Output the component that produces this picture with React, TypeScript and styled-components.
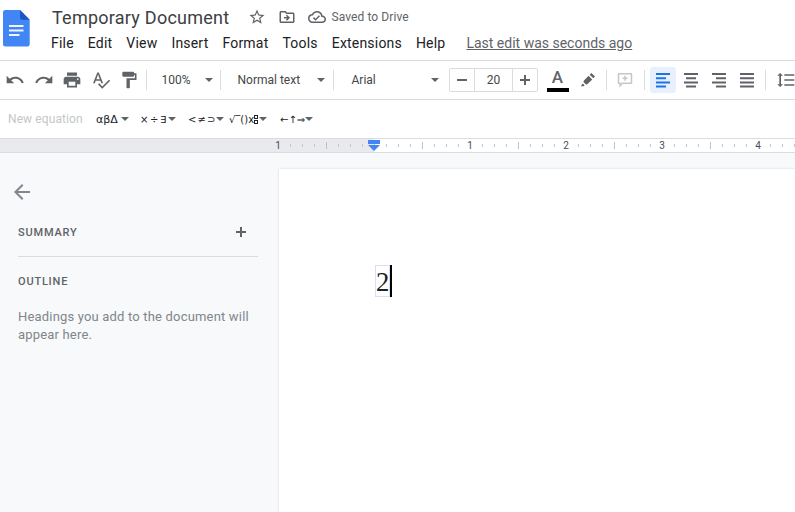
import React from 'react'
import styled, { createGlobalStyle } from 'styled-components'
import {
  MdArrowBack,
  MdFormatLineSpacing,
  MdFormatPaint,
  MdOutlineCloudDone,
  MdOutlineDriveFileMove,
  MdPrint,
  MdRedo,
  MdSpellcheck,
  MdStarBorder,
  MdUndo,
} from 'react-icons/md'

const GlobalStyle = createGlobalStyle`
  html, body {
    margin: 0;
    width: 795px;
    height: 512px;
    overflow: hidden;
    background: #fff;
    font-family: Roboto, "Liberation Sans", sans-serif;
  }
`

const Root = styled.div`
  width: 795px;
  height: 512px;
  display: flex;
  flex-direction: column;
  overflow: hidden;
`

const Header = styled.header`
  height: 60px;
  display: flex;
  flex-shrink: 0;
  border-bottom: 1px solid #dadce0;
`
const LogoSlot = styled.div`
  width: 52px;
  padding: 10px 0 0 3px;
  box-sizing: border-box;
`
const HeaderMain = styled.div`
  display: flex;
  flex-direction: column;
`
const TitleRow = styled.div`
  height: 34px;
  display: flex;
  align-items: center;
  color: #5f6368;
`
const Title = styled.span`
  font-size: 18px;
  letter-spacing: 0.25px;
  color: #3c4043;
  margin-right: 19px;
`
const StatusIcons = styled.div`
  display: flex;
  align-items: center;
  gap: 12px;
  font-size: 18px;
`
const Saved = styled.span`
  font-size: 12px;
  color: #5f6368;
  margin-left: -7px;
  letter-spacing: 0.1px;
`
const MenuRow = styled.nav`
  display: flex;
  align-items: center;
  height: 18px;
  margin-left: -1px;
`
const MenuItem = styled.span`
  font-size: 14px;
  letter-spacing: 0.2px;
  color: #202124;
  margin-right: 14px;
`
const LastEdit = styled.span`
  font-size: 14px;
  color: #5f6368;
  text-decoration: underline;
  margin-left: 7px;
`

const Toolbar = styled.div`
  height: 38px;
  display: flex;
  align-items: center;
  padding-left: 1px;
  flex-shrink: 0;
  border-bottom: 1px solid #dadce0;
`
const ToolIcon = styled.span<{ $w?: number; $mr?: number; $muted?: boolean; $active?: boolean }>`
  width: ${(p) => p.$w ?? 28.5}px;
  height: 26px;
  margin-right: ${(p) => p.$mr ?? 0}px;
  flex-shrink: 0;
  display: flex;
  align-items: center;
  justify-content: center;
  border-radius: 3px;
  font-size: 20px;
  color: ${(p) => (p.$active ? '#1a73e8' : p.$muted ? '#bdc1c6' : '#5f6368')};
  background: ${(p) => (p.$active ? '#e8f0fe' : 'transparent')};
`
const Sep = styled.span<{ $ml?: number; $mr?: number }>`
  width: 1px;
  height: 20px;
  flex-shrink: 0;
  background: #dadce0;
  margin: 0 ${(p) => p.$mr ?? 5}px 0 ${(p) => p.$ml ?? 5}px;
`
const Picker = styled.span<{ $w: number; $pl: number }>`
  width: ${(p) => p.$w}px;
  padding-left: ${(p) => p.$pl}px;
  box-sizing: border-box;
  flex-shrink: 0;
  display: flex;
  align-items: center;
  justify-content: space-between;
  font-size: 12px;
  color: #444746;
`
const Caret = styled.i`
  display: inline-block;
  width: 0;
  height: 0;
  flex-shrink: 0;
  border-left: 4px solid transparent;
  border-right: 4px solid transparent;
  border-top: 4px solid #5f6368;
`
const Stepper = styled.div`
  width: 89px;
  height: 24px;
  margin-left: 10px;
  flex-shrink: 0;
  box-sizing: border-box;
  border: 1px solid #dadce0;
  border-radius: 2px;
  display: grid;
  grid-template-columns: 24px 1fr 24px;
  align-items: center;
  justify-items: center;
  font-size: 12px;
  color: #444746;
`
const StepButton = styled.span`
  width: 100%;
  height: 100%;
  display: flex;
  align-items: center;
  justify-content: center;
  color: #5f6368;
`
const StepValue = styled.span`
  width: 100%;
  height: 100%;
  display: flex;
  align-items: center;
  justify-content: center;
  padding-left: 1px;
  border-left: 1px solid #dadce0;
  border-right: 1px solid #dadce0;
  box-sizing: border-box;
`
const ColorButton = styled.span`
  width: 22px;
  height: 26px;
  margin: 0 9px;
  flex-shrink: 0;
  display: flex;
  flex-direction: column;
  align-items: center;
  justify-content: flex-end;
`
const ColorLetter = styled.span`
  font-size: 17px;
  line-height: 17px;
  font-weight: 500;
  color: #5f6368;
`
const ColorBar = styled.span`
  width: 22px;
  height: 4px;
  margin-top: 2px;
  margin-bottom: 1px;
  background: #000;
`

const EquationBar = styled.div`
  height: 38px;
  display: flex;
  align-items: center;
  padding-left: 8px;
  flex-shrink: 0;
  border-bottom: 1px solid #dadce0;
`
const NewEquation = styled.span`
  font-size: 12px;
  color: #c4c7c5;
  letter-spacing: 0.1px;
  width: 88px;
`
const EqGroup = styled.span<{ $w: number; $mr: number }>`
  width: ${(p) => p.$w}px;
  margin-right: ${(p) => p.$mr}px;
  display: flex;
  align-items: center;
  justify-content: space-between;
  flex-shrink: 0;
`
const EqGlyphs = styled.span<{ $size?: number; $track?: number }>`
  display: inline-flex;
  align-items: center;
  font-family: 'DejaVu Sans', sans-serif;
  font-size: ${(p) => p.$size ?? 10}px;
  letter-spacing: ${(p) => p.$track ?? 0}px;
  color: #202124;
  white-space: pre;
`
const IndexBoxes = styled.span`
  display: inline-flex;
  flex-direction: column;
  gap: 1px;
`
const IndexBox = styled.i`
  display: block;
  width: 2px;
  height: 2px;
  border: 1px solid #202124;
`

const Ruler = styled.div`
  height: 13px;
  position: relative;
  display: flex;
  padding-left: 272px;
  flex-shrink: 0;
  border-bottom: 1px solid #dadce0;
  background: linear-gradient(to right, #e8eaed 374px, #fff 374px);
`
const RulerCell = styled.span`
  width: 12px;
  flex-shrink: 0;
  display: flex;
  align-items: center;
  justify-content: center;
`
const Tick = styled.i<{ $major?: boolean }>`
  display: block;
  width: 1px;
  height: ${(p) => (p.$major ? 7 : 3)}px;
  background: ${(p) => (p.$major ? '#bdc1c6' : '#c4c7c5')};
`
const RulerNumber = styled.span`
  font-size: 10px;
  line-height: 13px;
  color: #4a4a5a;
`
const IndentMarker = styled.span`
  position: absolute;
  left: 368px;
  top: 1px;
  width: 12px;
  display: flex;
  flex-direction: column;
  align-items: center;
`
const IndentTop = styled.i`
  display: block;
  width: 12px;
  height: 4px;
  background: #4285f4;
`
const IndentArrow = styled.i`
  display: block;
  margin-top: 1px;
  width: 0;
  height: 0;
  border-left: 6px solid transparent;
  border-right: 6px solid transparent;
  border-top: 6px solid #4285f4;
`

const Body = styled.div`
  flex: 1;
  display: flex;
  background: #f8f9fa;
  min-height: 0;
`
const Sidebar = styled.aside`
  width: 279px;
  flex-shrink: 0;
  padding: 27px 21px 0 18px;
  box-sizing: border-box;
`
const BackIcon = styled.div`
  margin-left: -8px;
  height: 43px;
  font-size: 24px;
  line-height: 0;
  color: #80868b;
`
const SectionHead = styled.div`
  display: flex;
  align-items: center;
  justify-content: space-between;
  font-size: 11px;
  font-weight: 500;
  letter-spacing: 0.8px;
  color: #5f6368;
  height: 18px;
`
const AddIcon = styled.span`
  display: flex;
  margin-right: 12px;
  color: #5f6368;
`
const Divider = styled.hr`
  margin: 15px 0 15px;
  border: 0;
  border-top: 1px solid #dadce0;
`
const Hint = styled.p`
  margin: 18px 0 0;
  font-size: 13px;
  line-height: 18px;
  letter-spacing: 0.18px;
  color: #80868b;
`
const Page = styled.main`
  flex: 1;
  margin-top: 16px;
  padding: 96px 0 0 96px;
  background: #fff;
  box-shadow: 0 0 2px rgba(60, 64, 67, 0.2);
`
const TextLine = styled.div`
  display: flex;
  align-items: stretch;
  height: 32px;
`
const Digit = styled.span`
  box-sizing: border-box;
  width: 15px;
  background: #fff;
  border: 1px solid #d6defa;
  font-family: 'Liberation Serif', serif;
  font-size: 26.67px;
  line-height: 32px;
  color: #202124;
  text-align: center;
`
const Cursor = styled.i`
  width: 2px;
  background: #000;
`

function DocsLogo() {
  return (
    <svg width="27" height="37" viewBox="0 0 27 37" aria-hidden="true">
      <path d="M2.5 0H17l9.7 9.7V34a2.5 2.5 0 0 1-2.5 2.5H2.5A2.5 2.5 0 0 1 0 34V2.5A2.5 2.5 0 0 1 2.5 0Z" fill="#4285f4" />
      <path d="M17 0l9.7 9.7h-7.4A2.3 2.3 0 0 1 17 7.4Z" fill="#1a56c4" />
      <path d="M6 15h14.5v2H6zM6 19.5h14.5v2H6zM6 24h10.5v2H6z" fill="#f1f5fe" />
    </svg>
  )
}

function HighlightPen() {
  return (
    <svg width="16" height="16" viewBox="0 0 16 16" aria-hidden="true">
      <path d="M11.4 1l3.6 3.6-1.7 1.7-3.6-3.6ZM8.6 3.8l3.6 3.6-4.6 4.6c-.6.6-1.6.6-2.2 0l-1.4-1.4c-.6-.6-.6-1.6 0-2.2ZM2.8 11.4l1.8 1.8-1.1 1H.8Z" fill="#5f6368" />
    </svg>
  )
}

function CommentIcon() {
  return (
    <svg width="16" height="16" viewBox="0 0 16 16" fill="none" aria-hidden="true">
      <path d="M2 1.7h12c.3 0 .5.2.5.5v8.6c0 .3-.2.5-.5.5H5.2L3.2 13.8 3 11.3H2c-.3 0-.5-.2-.5-.5V2.200c0-.3.2-.5.5-.5Z" stroke="#c4c7c5" strokeWidth="1.5" />
      <path d="M8 3.800v5M5.500 6.300h5" stroke="#c4c7c5" strokeWidth="1.500" />
    </svg>
  )
}

function PlusIcon() {
  return (
    <svg width="10" height="10" viewBox="0 0 10 10" aria-hidden="true">
      <path d="M5 0v10M0 5h10" stroke="currentColor" strokeWidth="2" />
    </svg>
  )
}

function MinusIcon() {
  return (
    <svg width="10" height="10" viewBox="0 0 10 10" aria-hidden="true">
      <path d="M0 5h10" stroke="currentColor" strokeWidth="2" />
    </svg>
  )
}

// the docs alignment glyphs have four bars, unlike the five of the material set
const alignBars = {
  left: ['M0 0h14', 'M0 4.200h10', 'M0 8.400h14', 'M0 12.600h10'],
  center: ['M0 0h14', 'M2 4.200h10', 'M0 8.400h14', 'M2 12.600h10'],
  right: ['M0 0h14', 'M4 4.200h10', 'M0 8.400h14', 'M4 12.600h10'],
  justify: ['M0 0h14', 'M0 4.200h14', 'M0 8.400h14', 'M0 12.600h14'],
}

function AlignIcon({ kind }: { kind: keyof typeof alignBars }) {
  return (
    <svg width="14" height="15" viewBox="0 -1 14 15" aria-hidden="true">
      <path d={alignBars[kind].join('')} stroke="currentColor" strokeWidth="2" />
    </svg>
  )
}

const menus = ['File', 'Edit', 'View', 'Insert', 'Format', 'Tools', 'Extensions', 'Help']

// one cell every 12px, a number every 8 cells and a long tick halfway between
const rulerLabels: Record<number, string> = { 0: '1', 16: '1', 24: '2', 32: '3', 40: '4' }
const rulerCells = Array.from({ length: 44 }).map((_, index) => index)

export default function App() {
  return (
    <Root>
      <GlobalStyle />
      <Header>
        <LogoSlot>
          <DocsLogo />
        </LogoSlot>
        <HeaderMain>
          <TitleRow>
            <Title>Temporary Document</Title>
            <StatusIcons>
              <MdStarBorder />
              <MdOutlineDriveFileMove />
              <MdOutlineCloudDone />
              <Saved>Saved to Drive</Saved>
            </StatusIcons>
          </TitleRow>
          <MenuRow>
            {menus.map((menu) => (
              <MenuItem key={menu}>{menu}</MenuItem>
            ))}
            <LastEdit>Last edit was seconds ago</LastEdit>
          </MenuRow>
        </HeaderMain>
      </Header>

      <Toolbar>
        <ToolIcon><MdUndo /></ToolIcon>
        <ToolIcon><MdRedo /></ToolIcon>
        <ToolIcon><MdPrint /></ToolIcon>
        <ToolIcon><MdSpellcheck /></ToolIcon>
        <ToolIcon><MdFormatPaint /></ToolIcon>
        <Sep $ml={2} $mr={0} />
        <Picker $w={66} $pl={15}>100%<Caret /></Picker>
        <Sep $ml={7} $mr={0} />
        <Picker $w={104} $pl={17}>Normal text<Caret /></Picker>
        <Sep $ml={8} $mr={0} />
        <Picker $w={105} $pl={18}>Arial<Caret /></Picker>
        <Stepper>
          <StepButton><MinusIcon /></StepButton>
          <StepValue>20</StepValue>
          <StepButton><PlusIcon /></StepButton>
        </Stepper>
        <ColorButton>
          <ColorLetter>A</ColorLetter>
          <ColorBar />
        </ColorButton>
        <ToolIcon $w={20}><HighlightPen /></ToolIcon>
        <Sep $ml={8} $mr={0} />
        <ToolIcon $w={37} $muted><CommentIcon /></ToolIcon>
        <Sep $ml={0} $mr={5} />
        <ToolIcon $w={26} $mr={1} $active><AlignIcon kind="left" /></ToolIcon>
        <ToolIcon $w={28}><AlignIcon kind="center" /></ToolIcon>
        <ToolIcon $w={28}><AlignIcon kind="right" /></ToolIcon>
        <ToolIcon $w={28}><AlignIcon kind="justify" /></ToolIcon>
        <Sep $ml={4} $mr={6} />
        <ToolIcon><MdFormatLineSpacing /></ToolIcon>
      </Toolbar>

      <EquationBar>
        <NewEquation>New equation</NewEquation>
        <EqGroup $w={33} $mr={11}><EqGlyphs $size={11}>αβΔ</EqGlyphs><Caret /></EqGroup>
        <EqGroup $w={35} $mr={13}><EqGlyphs $track={1.5}>×÷∃</EqGlyphs><Caret /></EqGroup>
        <EqGroup $w={33} $mr={8}><EqGlyphs $track={1}>{'<≠⊃'}</EqGlyphs><Caret /></EqGroup>
        <EqGroup $w={38} $mr={13}>
          <EqGlyphs>
            √‾()x
            <IndexBoxes><IndexBox /><IndexBox /></IndexBoxes>
          </EqGlyphs>
          <Caret />
        </EqGroup>
        <EqGroup $w={33} $mr={0}><EqGlyphs>←↑⇒</EqGlyphs><Caret /></EqGroup>
      </EquationBar>

      <Ruler>
        {rulerCells.map((cell) => (
          <RulerCell key={cell}>
            {rulerLabels[cell] ? (
              <RulerNumber>{rulerLabels[cell]}</RulerNumber>
            ) : (
              <Tick $major={cell % 4 === 0} />
            )}
          </RulerCell>
        ))}
        <IndentMarker>
          <IndentTop />
          <IndentArrow />
        </IndentMarker>
      </Ruler>

      <Body>
        <Sidebar>
          <BackIcon><MdArrowBack /></BackIcon>
          <SectionHead>
            SUMMARY
            <AddIcon><PlusIcon /></AddIcon>
          </SectionHead>
          <Divider />
          <SectionHead>OUTLINE</SectionHead>
          <Hint>Headings you add to the document will appear here.</Hint>
        </Sidebar>
        <Page>
          <TextLine>
            <Digit>2</Digit>
            <Cursor />
          </TextLine>
        </Page>
      </Body>
    </Root>
  )
}
